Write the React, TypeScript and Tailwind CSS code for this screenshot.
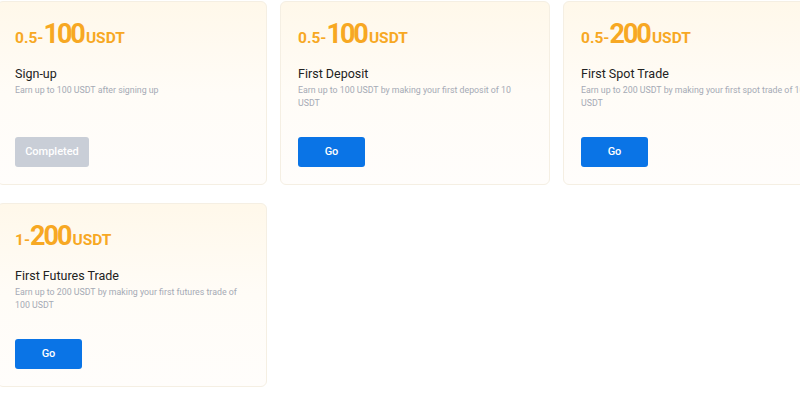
import React from 'react';

type Task = {
  min: string;
  max: string;
  title: string;
  desc: string;
  done?: boolean;
};

const tasks: Task[] = [
  { min: '0.5-', max: '100', title: 'Sign-up', desc: 'Earn up to 100 USDT after signing up', done: true },
  { min: '0.5-', max: '100', title: 'First Deposit', desc: 'Earn up to 100 USDT by making your first deposit of 10 USDT' },
  { min: '0.5-', max: '200', title: 'First Spot Trade', desc: 'Earn up to 200 USDT by making your first spot trade of 100 USDT' },
  { min: '1-', max: '200', title: 'First Futures Trade', desc: 'Earn up to 200 USDT by making your first futures trade of 100 USDT' },
];

const TaskCard = ({ task }: { task: Task }) => {
  return (
    <div className="h-[184px] rounded-md border border-[#f5efe3] bg-gradient-to-b from-[#fff8ea] via-[#fffcf7] to-[#fffdfb] px-[17px] pt-[19px] flex flex-col">
      {/* Reward range */}
      <div className="flex items-baseline text-[#f7a823] font-bold leading-none">
        <span className="text-[15.5px]">{task.min}</span>
        <span className="text-[27px] tracking-[-2px] mr-[2px]">{task.max}</span>
        <span className="text-[15.5px]">USDT</span>
      </div>

      <h3 className="mt-[18px] text-[12.5px] leading-[16px] text-[#222]">{task.title}</h3>
      <p className="mt-[2px] w-[232px] text-[8.8px] leading-[13px] text-[#a5aab5]">
        {task.desc}
      </p>

      <div className="mt-auto mb-[17px]">
        {task.done ? (
          <button className="w-[74px] h-[30px] rounded-[3px] bg-[#c9ced7] text-white text-[11px] font-medium">
            Completed
          </button>
        ) : (
          <button className="w-[67px] h-[30px] rounded-[3px] bg-[#0a74e6] text-white text-[11px] font-medium">
            Go
          </button>
        )}
      </div>
    </div>
  );
};

const App = () => {
  return (
    <div className="w-[800px] h-[394px] overflow-hidden bg-white" style={{ fontFamily: 'Roboto, "Noto Sans", sans-serif' }}>
      <div className="-ml-[3px] mt-[1px] grid grid-cols-[270px_270px_270px] gap-x-[13px] gap-y-[18px]">
        {tasks.map((t) => (
          <TaskCard key={t.title} task={t} />
        ))}
      </div>
    </div>
  );
};

export default App;
